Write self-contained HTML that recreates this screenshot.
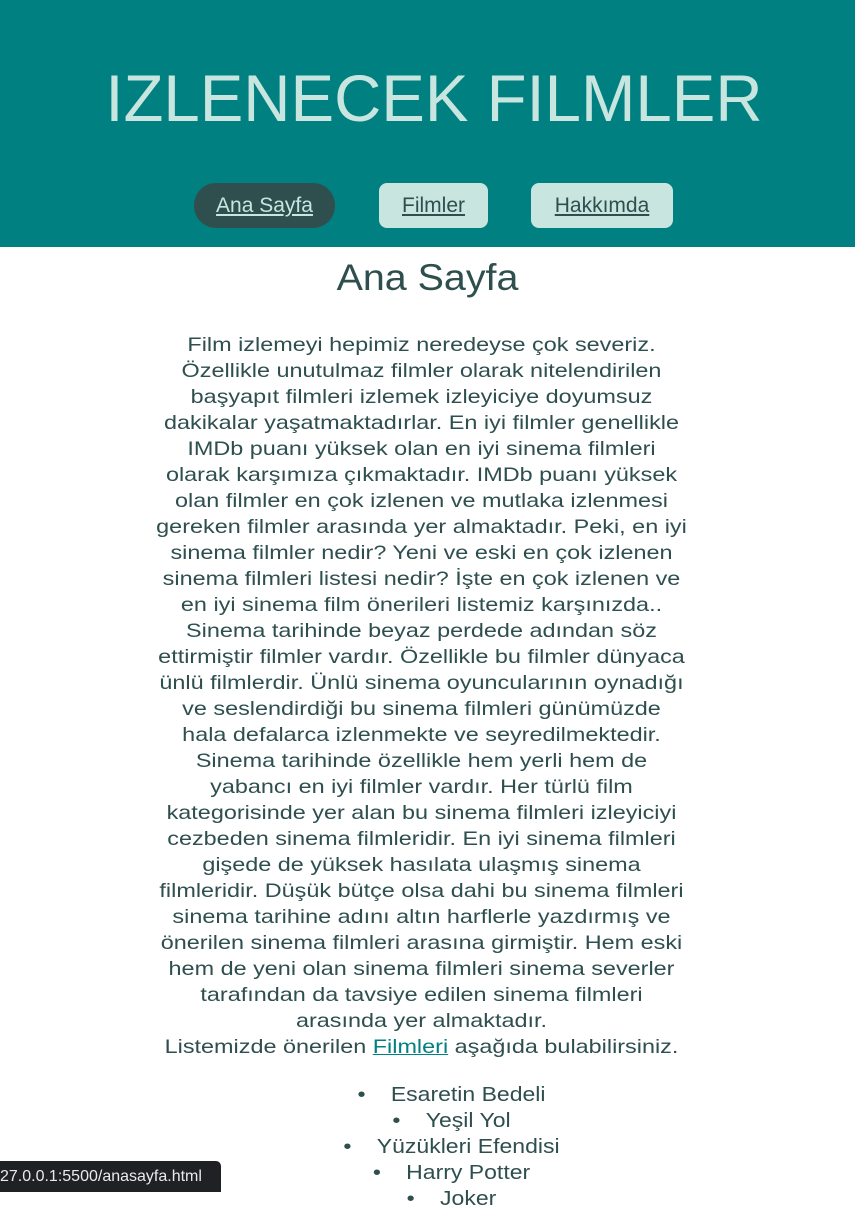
<!DOCTYPE html>
<html><head><meta charset="utf-8"><style>
body{margin:0;width:855px;height:1192px;overflow:hidden;background:#fff;font-family:"Liberation Sans",sans-serif;color:#2f4f4f;}
header{background:#008080;height:247px;position:relative;}
.t{position:absolute;top:62px;left:6px;width:855px;text-align:center;color:#c8e6df;font-size:66px;line-height:72px;}
.t span{display:inline-block;transform:scaleX(0.99);}
.b{position:absolute;top:183px;height:45px;line-height:45px;text-align:center;font-size:21px;text-decoration:underline;}
h1{position:absolute;top:256px;left:0;width:855px;margin:0;text-align:center;font-weight:normal;font-size:37px;line-height:44px;transform:scaleX(1.065);}
.p{position:absolute;top:332px;left:-6px;width:855px;text-align:center;font-size:19.5px;line-height:26px;white-space:nowrap;transform:scaleX(1.2);}
.p a{color:#008080;}
ul{position:absolute;top:1082px;left:24px;width:855px;margin:0;padding:0;list-style:none;text-align:center;font-size:20px;line-height:26px;transform:scaleX(1.15);}
li:before{content:"•";margin-right:22px;}
.tip{position:absolute;left:0;top:1161px;width:221px;height:31px;background:#202124;color:#e8eaed;font-size:16px;line-height:31px;border-top-right-radius:5px;white-space:nowrap;overflow:hidden;}
</style></head><body>
<header>
<div class="t"><span>IZLENECEK FILMLER</span></div>
<div class="b" style="left:194px;width:141px;background:#2f4f4f;color:#c8e6df;border-radius:22px;">Ana Sayfa</div>
<div class="b" style="left:379px;width:109px;background:#c8e6df;color:#2f4f4f;border-radius:8px;">Filmler</div>
<div class="b" style="left:531px;width:142px;background:#c8e6df;color:#2f4f4f;border-radius:8px;">Hakkımda</div>
</header>
<h1>Ana Sayfa</h1>
<div class="p">Film izlemeyi hepimiz neredeyse çok severiz.<br>Özellikle unutulmaz filmler olarak nitelendirilen<br>başyapıt filmleri izlemek izleyiciye doyumsuz<br>dakikalar yaşatmaktadırlar. En iyi filmler genellikle<br>IMDb puanı yüksek olan en iyi sinema filmleri<br>olarak karşımıza çıkmaktadır. IMDb puanı yüksek<br>olan filmler en çok izlenen ve mutlaka izlenmesi<br>gereken filmler arasında yer almaktadır. Peki, en iyi<br>sinema filmler nedir? Yeni ve eski en çok izlenen<br>sinema filmleri listesi nedir? İşte en çok izlenen ve<br>en iyi sinema film önerileri listemiz karşınızda..<br>Sinema tarihinde beyaz perdede adından söz<br>ettirmiştir filmler vardır. Özellikle bu filmler dünyaca<br>ünlü filmlerdir. Ünlü sinema oyuncularının oynadığı<br>ve seslendirdiği bu sinema filmleri günümüzde<br>hala defalarca izlenmekte ve seyredilmektedir.<br>Sinema tarihinde özellikle hem yerli hem de<br>yabancı en iyi filmler vardır. Her türlü film<br>kategorisinde yer alan bu sinema filmleri izleyiciyi<br>cezbeden sinema filmleridir. En iyi sinema filmleri<br>gişede de yüksek hasılata ulaşmış sinema<br>filmleridir. Düşük bütçe olsa dahi bu sinema filmleri<br>sinema tarihine adını altın harflerle yazdırmış ve<br>önerilen sinema filmleri arasına girmiştir. Hem eski<br>hem de yeni olan sinema filmleri sinema severler<br>tarafından da tavsiye edilen sinema filmleri<br>arasında yer almaktadır.<br>Listemizde önerilen <a href="#">Filmleri</a> aşağıda bulabilirsiniz.</div>
<ul><li>Esaretin Bedeli</li><li>Yeşil Yol</li><li>Yüzükleri Efendisi</li><li>Harry Potter</li><li>Joker</li></ul>
<div class="tip">27.0.0.1:5500/anasayfa.html</div>
</body></html>
